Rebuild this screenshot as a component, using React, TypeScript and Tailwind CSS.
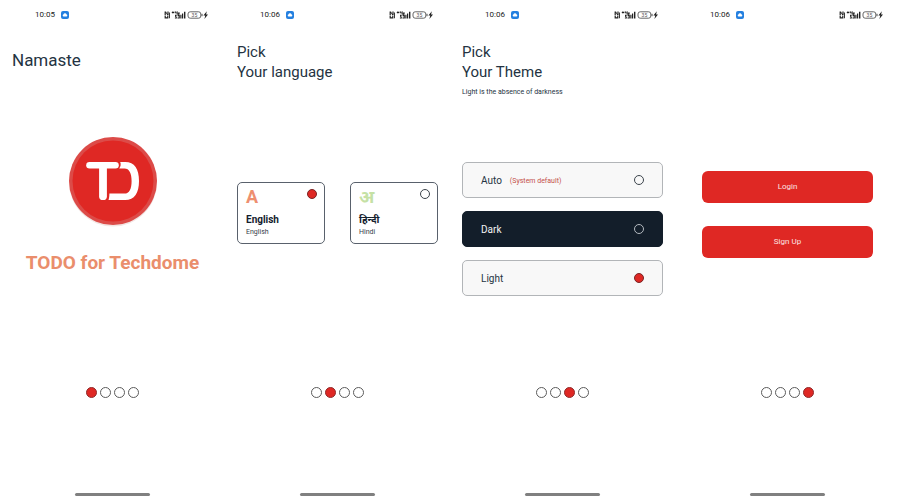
import React, { useState } from "react";
import type { ReactNode } from "react";

function StatusIcons() {
  return (
    <svg width="46" height="12" viewBox="0 0 46 12" fill="none" aria-hidden="true">
      <g fill="#222">
        <path d="M1.6 2.6h1.4l1.4 2.4V2.6h1.2V6H4.2L2.8 3.8V6H1.6zM1.6 6.6h1.2v1.7h1.4V6.6h1.2v3H1.6zM6 3.4h.9v5.8H6z" />
        <path d="M8.8 3h2.4v.9H8.8zM9.5 2.2h.9v2.4h-.9zM11.8 2.2h.9v1.2h1V2.2h.9v3.2h-.9V4.2h-1.9z" />
        <path d="M12 5.8h1.6v1.1h-.9v.6h1.1v2h-1.9v-.9h.9v-.5H12zM14.6 3.6h2.2v1.1h-1.1v.8h1.1v4h-2.3v-1h1.2v-1.2h-1.1z" />
        <path d="M17.3 5.8h1.2v3.6h-1.2zM19 4.4h1.2v5H19zM21 2.8h1.4v6.6H21z" />
        <path d="M43.8 2.2 40.4 6.6h1.9l-.9 3.4 3.6-4.6h-1.9z" />
      </g>
      <rect x="25" y="2.8" width="12.8" height="6.4" rx="2.2" stroke="#555" strokeWidth=".9" />
      <path d="M39 4.8v2.4" stroke="#444" strokeWidth="1" />
      <text x="31.4" y="8" fontSize="5" fill="#555" textAnchor="middle" fontFamily="Roboto, sans-serif">
        35
      </text>
    </svg>
  );
}

function StatusBar({ time }: { time: string }) {
  return (
    <div className="flex h-[30px] items-center justify-between pr-4 pl-[35px]">
      <div className="flex items-center gap-[6px]">
        <span className="text-[8px] leading-3 text-[#222]">{time}</span>
        <svg width="8" height="8" viewBox="0 0 8 8" aria-hidden="true">
          <rect width="8" height="8" rx="2" fill="#2480e0" />
          <path d="M2.4 5.4a1 1 0 0 1 0-1.9 1.7 1.7 0 0 1 3.2 0 1 1 0 0 1 0 1.9z" fill="#fff" />
        </svg>
      </div>
      <StatusIcons />
    </div>
  );
}

const steps = ["Welcome", "Language", "Theme", "Account"];

function Screen({ time, step, header, children }: { time: string; step: number; header?: ReactNode; children: ReactNode }) {
  return (
    <section className="flex min-h-screen flex-col bg-white">
      <StatusBar time={time} />
      <header className="h-20 px-3 pt-3 text-[#243342]">{header}</header>
      <div className="flex-1">{children}</div>
      <nav className="flex justify-center gap-[3px]" aria-label="Steps">
        {steps.map((name, i) => (
          <button
            key={name}
            type="button"
            aria-label={name}
            className={`size-[11px] rounded-full border ${i === step ? "border-[#8f2a2a] bg-[#df2824]" : "border-[#5b5b5b] bg-white"}`}
          />
        ))}
      </nav>
      <div className="flex justify-center pt-[95px] pb-1">
        <div className="h-[3px] w-1/3 rounded-full bg-[#808080]" />
      </div>
    </section>
  );
}

function Radio({ name, checked, onChange, dark }: { name: string; checked: boolean; onChange: () => void; dark?: boolean }) {
  return (
    <input
      type="radio"
      name={name}
      checked={checked}
      onChange={onChange}
      className={`size-[10px] shrink-0 appearance-none rounded-full border checked:border-[#7a2424] checked:bg-[#df2824] ${dark ? "border-[#b4bac0]" : "border-[#3c444c]"}`}
    />
  );
}

function Logo() {
  return (
    <svg width="92" height="92" viewBox="0 0 92 92" role="img" aria-label="Techdome logo">
      <circle cx="46" cy="47.5" r="44" fill="#f3e6e4" />
      <circle cx="46" cy="46" r="44" fill="#dc4b48" />
      <circle cx="46" cy="46" r="40.5" fill="#df2824" />
      <g fill="none" stroke="#fff" strokeLinecap="round">
        <path d="M22.5 30.2H48.5" strokeWidth="6.6" />
        <path d="M36 32V61.2" strokeWidth="7.8" />
      </g>
      <path
        d="M53.2 27h5C67.6 27 72 34 72 46S67.6 65 58.2 65H41.5c.6-1.8.9-3.8.9-6.4h15c5 0 7.2-4.8 7.2-12.6s-2.2-12.6-7.2-12.6h-5.2c1.4-1.6 2-4.2 1-6.4z"
        fill="#fff"
      />
    </svg>
  );
}

const languages = [
  { id: "en", glyph: "A", name: "English", label: "English", tint: "text-[#ee8f70]" },
  { id: "hi", glyph: "अ", name: "हिन्दी", label: "Hindi", tint: "text-[#c5e1a5]" },
];

const themes = [
  { id: "auto", name: "Auto", note: "(System default)" },
  { id: "dark", name: "Dark", note: "" },
  { id: "light", name: "Light", note: "" },
];

export default function App() {
  const [language, setLanguage] = useState("en");
  const [theme, setTheme] = useState("light");

  return (
    <main className="grid min-h-screen grid-cols-4 bg-white font-['Roboto','Noto_Sans',sans-serif]">
      <Screen time="10:05" step={0} header={<h1 className="pt-2 text-[17px] leading-5">Namaste</h1>}>
        <div className="flex flex-col items-center pt-[25px]">
          <Logo />
          <p className="pt-6 text-[19px] leading-6 font-bold whitespace-nowrap text-[#ea8e6c]">TODO for Techdome</p>
        </div>
      </Screen>

      <Screen
        time="10:06"
        step={1}
        header={
          <h1 className="text-[15px] leading-5">
            Pick
            <br />
            Your language
          </h1>
        }
      >
        <div className="grid grid-cols-2 gap-[25px] px-3 pt-[72px]">
          {languages.map((l) => (
            <label key={l.id} className="flex h-[62px] justify-between rounded-[5px] border border-[#59616c] pt-[6px] pr-[7px] pl-2">
              <span className="flex flex-col text-[#14212e]">
                <span className={`h-[22px] text-[18px] leading-4 font-bold ${l.tint}`}>{l.glyph}</span>
                <span className="text-[10px] leading-[17px] font-bold">{l.name}</span>
                <span className="text-[7px] leading-2 text-[#35404a]">{l.label}</span>
              </span>
              <Radio name="language" checked={language === l.id} onChange={() => setLanguage(l.id)} />
            </label>
          ))}
        </div>
      </Screen>

      <Screen
        time="10:06"
        step={2}
        header={
          <>
            <h1 className="text-[15px] leading-5">
              Pick
              <br />
              Your Theme
            </h1>
            <p className="pt-1 text-[7px] leading-3">Light is the absence of darkness</p>
          </>
        }
      >
        <div className="flex flex-col gap-[13px] px-3 pt-[52px]">
          {themes.map((t) => (
            <label
              key={t.id}
              className={`flex h-9 items-center rounded-[5px] border pr-[18px] pl-[18px] ${t.id === "dark" ? "border-[#131e2a] bg-[#131e2a] text-[#f2f2f2]" : "border-[#b2b5b8] bg-[#f8f8f8] text-[#243342]"}`}
            >
              <span className="pt-[2px] text-[10px] leading-4">{t.name}</span>
              {t.note && <span className="pt-[2px] pl-2 text-[7px] leading-4 text-[#c4504a]">{t.note}</span>}
              <span className="flex flex-1 justify-end">
                <Radio name="theme" checked={theme === t.id} onChange={() => setTheme(t.id)} dark={t.id === "dark"} />
              </span>
            </label>
          ))}
        </div>
      </Screen>

      <Screen time="10:06" step={3}>
        <div className="flex flex-col gap-[23px] px-[27px] pt-[61px]">
          <button type="button" className="h-8 rounded-md bg-[#df2824] text-[8px] text-[#fbe4e2]">
            Login
          </button>
          <button type="button" className="h-8 rounded-md bg-[#df2824] text-[8px] text-[#fbe4e2]">
            Sign Up
          </button>
        </div>
      </Screen>
    </main>
  );
}
